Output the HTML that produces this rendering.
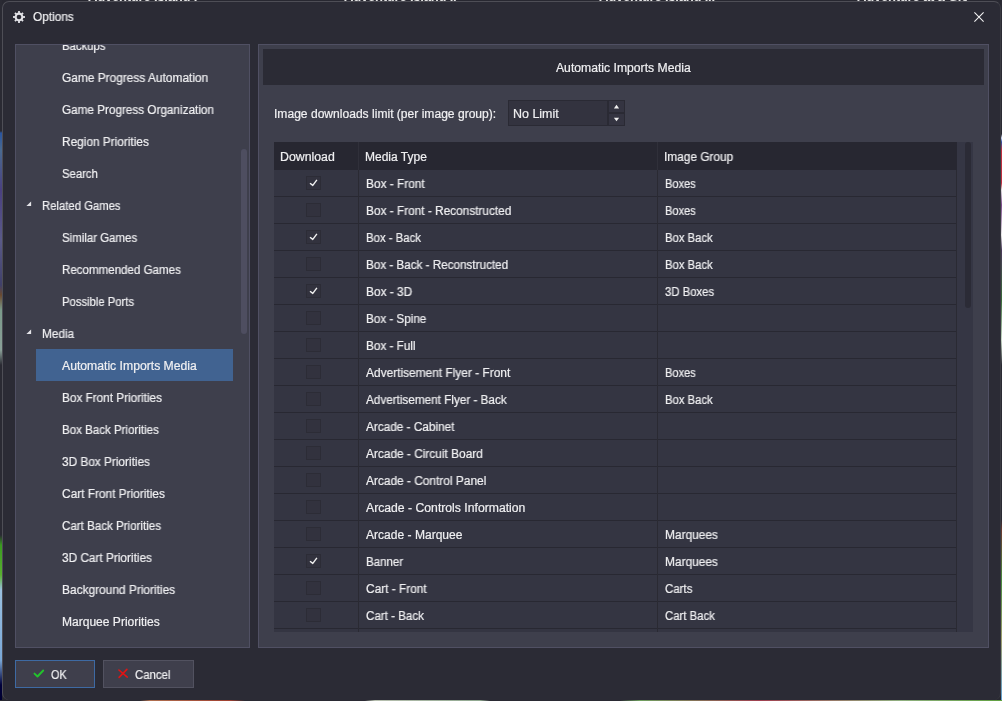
<!DOCTYPE html>
<html><head><meta charset="utf-8">
<style>
*{box-sizing:border-box;margin:0;padding:0}
html,body{width:1002px;height:701px;overflow:hidden}
body{-webkit-font-smoothing:antialiased;background:#282831;font-family:"Liberation Sans",sans-serif;font-size:12px;color:#f0f0f2;position:relative}
.abs{position:absolute}
.bgt{position:absolute;top:-10px;height:14px;font:bold 13px/14px "Liberation Sans",sans-serif;color:#e8e8e8;white-space:nowrap;overflow:hidden;letter-spacing:-0.2px;will-change:transform}
.win{position:absolute;left:2px;top:1px;width:999px;height:699px;background:#2b2b35;border-radius:7px;border:1px solid #4e4e56;border-bottom:none;border-right-color:#3a3a42}
.t{position:absolute;white-space:nowrap;line-height:14px;will-change:transform;-webkit-text-stroke:0.2px #f0f0f2}
.panel{position:absolute;background:#3e3f4c;border:1px solid #505063}
.clip{position:absolute;overflow:hidden}
.sel{position:absolute;width:197px;height:32px;background:#416391}
.tri{position:absolute;width:0;height:0;border-style:solid;border-width:0 0 5px 5px;border-color:transparent transparent #dcdce2 transparent}
.sthumb{position:absolute;width:6px;background:#4e4e60;border-radius:3px}
.hdr{position:absolute;left:0;top:0;width:683px;height:28px;background:#272731}
.row{position:absolute;left:0;width:682px;height:27px;border-bottom:1px solid #282832;background:#343542}
.vl{position:absolute;top:0;width:1px;background:#2a2a33}
.vlh{position:absolute;top:0;width:1px;height:28px;background:#30303a}
.t{transform-origin:0 0}
.cb{position:absolute;width:15px;height:14px;border:1px solid #2c2c36;background:#32323e}
.track{position:absolute;top:0;width:16px;height:490px;background:#353644}
.tthumb{position:absolute;width:6px;background:#2b2b36;border-radius:3px}
.btn{position:absolute;top:660px;height:28px;background:#3f3f4c;border:1px solid #525260}
</style></head>
<body>
<div class="abs" style="left:0;top:0;width:2px;height:701px;background:linear-gradient(to bottom,#2a2a33 0,#2a2a33 131px,#2a55a0 133px,#4a6a90 150px,#4a4080 190px,#5a5a88 240px,#40406a 285px,#6a4a30 295px,#7a9a8a 310px,#8aa098 350px,#2a2a33 365px,#2a2a33 535px,#3a9a20 545px,#5ab030 575px,#9ac0e0 590px,#7aa8d8 660px,#00003a 685px,#000030 701px)"></div>
<div class="abs" style="left:1001px;top:0;width:1px;height:701px;background:linear-gradient(to bottom,#2a2a33 0,#2a2a33 134px,#d0d8f0 138px,#3050a0 142px,#c03040 150px,#c03040 183px,#e0e0e0 190px,#7a4a8a 205px,#e8e8e8 235px,#4a3a5a 250px,#3a6a3a 300px,#c8d8c8 340px,#2a2a33 365px,#2a2a33 520px,#6a3a30 530px,#4a8a40 580px,#a0a070 640px,#60a0d0 700px)"></div>
<div class="abs" style="left:0;top:700px;width:1002px;height:1px;background:linear-gradient(to right,#2a2a33 0,#2a2a33 140px,#b07050 150px,#a04030 230px,#2a2a33 245px,#2a2a33 365px,#b8c0b0 375px,#90a890 480px,#2a2a33 490px,#2a2a33 620px,#70a060 640px,#a04050 760px,#90b080 900px,#60a040 1002px)"></div>
<div class="abs" style="left:0;top:0;width:1002px;height:1px;overflow:hidden">
<div class="bgt" style="left:88px;width:111px">Adventure Island I</div>
<div class="bgt" style="left:344px;width:112px">Adventure Island II</div>
<div class="bgt" style="left:599px;width:117px">Adventure Island III</div>
<div class="bgt" style="left:857px;width:110px">Adventure at a Glo</div>
</div>
<div class="win"></div>

<svg class="abs" style="left:13px;top:11px" width="12" height="12" viewBox="0 0 12 12">
    <g fill="#e2e2e6">
    <path d="M6 1.6A4.4 4.4 0 1 0 6 10.4A4.4 4.4 0 1 0 6 1.6ZM6 3.7A2.3 2.3 0 1 1 6 8.3A2.3 2.3 0 1 1 6 3.7Z" fill-rule="evenodd"/>
    <rect x="5.1" y="0" width="1.8" height="12"/>
    <rect x="0" y="5.1" width="12" height="1.8"/>
    <rect x="5.1" y="0.3" width="1.8" height="11.4" transform="rotate(45 6 6)"/>
    <rect x="5.1" y="0.3" width="1.8" height="11.4" transform="rotate(-45 6 6)"/>
  </g>
  <circle cx="6" cy="6" r="2.3" fill="#2b2b35"/>
</svg>

<svg class="abs" style="left:973px;top:11px" width="12" height="12" viewBox="0 0 12 12">
  <path d="M1.4 1.4L10.6 10.6M10.6 1.4L1.4 10.6" stroke="#f4f4f4" stroke-width="1.05"/>
</svg>

<div class="panel" style="left:15px;top:44px;width:235px;height:604px"></div>
<div class="clip" style="left:16px;top:45px;width:233px;height:602px">
<div class="sel" style="left:20px;top:304px"></div>
<div class="t" style="left:46px;top:-6.2px;transform:scaleX(0.9437)">Backups</div>
<div class="t" style="left:46px;top:25.8px;transform:scaleX(0.9911)">Game Progress Automation</div>
<div class="t" style="left:46px;top:57.8px;transform:scaleX(0.9774)">Game Progress Organization</div>
<div class="t" style="left:46px;top:89.8px;transform:scaleX(0.9875)">Region Priorities</div>
<div class="t" style="left:46px;top:121.8px;transform:scaleX(0.9435)">Search</div>
<svg class="abs" style="left:10px;top:156px" width="6" height="6" viewBox="0 0 6 6"><path d="M0.4 5L5.1 5L5.1 0.4Z" fill="#e4e4e8"/></svg>
<div class="t" style="left:26px;top:153.8px;transform:scaleX(0.9422)">Related Games</div>
<div class="t" style="left:46px;top:185.8px;transform:scaleX(0.9544)">Similar Games</div>
<div class="t" style="left:46px;top:217.8px;transform:scaleX(0.9627)">Recommended Games</div>
<div class="t" style="left:46px;top:249.8px;transform:scaleX(0.9390)">Possible Ports</div>
<svg class="abs" style="left:10px;top:284px" width="6" height="6" viewBox="0 0 6 6"><path d="M0.4 5L5.1 5L5.1 0.4Z" fill="#e4e4e8"/></svg>
<div class="t" style="left:26px;top:281.8px;transform:scaleX(0.9819)">Media</div>
<div class="t" style="left:46px;top:313.8px;transform:scaleX(1.0158)">Automatic Imports Media</div>
<div class="t" style="left:46px;top:345.8px;transform:scaleX(0.9804)">Box Front Priorities</div>
<div class="t" style="left:46px;top:377.8px;transform:scaleX(0.9614)">Box Back Priorities</div>
<div class="t" style="left:46px;top:409.8px;transform:scaleX(0.9844)">3D Box Priorities</div>
<div class="t" style="left:46px;top:441.8px;transform:scaleX(0.9895)">Cart Front Priorities</div>
<div class="t" style="left:46px;top:473.8px;transform:scaleX(0.9641)">Cart Back Priorities</div>
<div class="t" style="left:46px;top:505.8px;transform:scaleX(0.9846)">3D Cart Priorities</div>
<div class="t" style="left:46px;top:537.8px;transform:scaleX(0.9922)">Background Priorities</div>
<div class="t" style="left:46px;top:569.8px;transform:scaleX(1.0030)">Marquee Priorities</div>
<div class="sthumb" style="left:225px;top:104px;height:185px"></div>
</div>

<div class="panel" style="left:258px;top:44px;width:731px;height:604px"></div>
<div class="abs" style="left:263px;top:49px;width:721px;height:36px;background:#2b2b35"></div>


<div class="abs" style="left:508px;top:100px;width:117px;height:26px;background:#33333f;border:1px solid #2a2a34"></div>

<div class="abs" style="left:607px;top:100px;width:18px;height:26px;background:#2a2a34"></div>
<div class="abs" style="left:609px;top:101px;width:15px;height:11px;background:#343441"></div>
<div class="abs" style="left:609px;top:114px;width:15px;height:11px;background:#343441"></div>
<svg class="abs" style="left:609px;top:101px" width="15" height="24" viewBox="0 0 15 24">
  <path d="M4.9 7.4L7.5 3.8L10.1 7.4Z" fill="#f0f0f0"/>
  <path d="M4.9 16.7L7.5 20.3L10.1 16.7Z" fill="#f0f0f0"/>
</svg>

<div class="clip" style="left:274px;top:142px;width:699px;height:490px;background:#353542">
<div class="hdr"></div>
<div class="t" style="left:6px;top:7.8px;transform:scaleX(1.0266)">Download</div>
<div class="t" style="left:91px;top:7.8px">Media Type</div>
<div class="t" style="left:390px;top:7.8px;transform:scaleX(0.9886)">Image Group</div>
<div class="row" style="top:28px"></div>
<div class="cb" style="left:32px;top:34px"><svg width="12" height="12" viewBox="0 0 12 12" style="position:absolute;left:0;top:0"><path d="M3 6.2L5.8 8.4L9.9 2.9" fill="none" stroke="#f2f2f2" stroke-width="1.4" stroke-linejoin="round"/></svg></div>
<div class="t" style="left:92px;top:34.8px;transform:scaleX(0.9884)">Box - Front</div>
<div class="t" style="left:391px;top:34.8px;transform:scaleX(0.9213)">Boxes</div>
<div class="row" style="top:55px"></div>
<div class="cb" style="left:32px;top:61px"></div>
<div class="t" style="left:92px;top:61.8px;transform:scaleX(0.9864)">Box - Front - Reconstructed</div>
<div class="t" style="left:391px;top:61.8px;transform:scaleX(0.9213)">Boxes</div>
<div class="row" style="top:82px"></div>
<div class="cb" style="left:32px;top:88px"><svg width="12" height="12" viewBox="0 0 12 12" style="position:absolute;left:0;top:0"><path d="M3 6.2L5.8 8.4L9.9 2.9" fill="none" stroke="#f2f2f2" stroke-width="1.4" stroke-linejoin="round"/></svg></div>
<div class="t" style="left:92px;top:88.8px;transform:scaleX(0.9483)">Box - Back</div>
<div class="t" style="left:391px;top:88.8px;transform:scaleX(0.9394)">Box Back</div>
<div class="row" style="top:109px"></div>
<div class="cb" style="left:32px;top:115px"></div>
<div class="t" style="left:92px;top:115.8px;transform:scaleX(0.9726)">Box - Back - Reconstructed</div>
<div class="t" style="left:391px;top:115.8px;transform:scaleX(0.9394)">Box Back</div>
<div class="row" style="top:136px"></div>
<div class="cb" style="left:32px;top:142px"><svg width="12" height="12" viewBox="0 0 12 12" style="position:absolute;left:0;top:0"><path d="M3 6.2L5.8 8.4L9.9 2.9" fill="none" stroke="#f2f2f2" stroke-width="1.4" stroke-linejoin="round"/></svg></div>
<div class="t" style="left:92px;top:142.8px;transform:scaleX(0.9892)">Box - 3D</div>
<div class="t" style="left:391px;top:142.8px;transform:scaleX(0.9444)">3D Boxes</div>
<div class="row" style="top:163px"></div>
<div class="cb" style="left:32px;top:169px"></div>
<div class="t" style="left:92px;top:169.8px;transform:scaleX(0.9726)">Box - Spine</div>
<div class="row" style="top:190px"></div>
<div class="cb" style="left:32px;top:196px"></div>
<div class="t" style="left:92px;top:196.8px;transform:scaleX(0.9781)">Box - Full</div>
<div class="row" style="top:217px"></div>
<div class="cb" style="left:32px;top:223px"></div>
<div class="t" style="left:92px;top:223.8px;transform:scaleX(0.9926)">Advertisement Flyer - Front</div>
<div class="t" style="left:391px;top:223.8px;transform:scaleX(0.9213)">Boxes</div>
<div class="row" style="top:244px"></div>
<div class="cb" style="left:32px;top:250px"></div>
<div class="t" style="left:92px;top:250.8px;transform:scaleX(0.9771)">Advertisement Flyer - Back</div>
<div class="t" style="left:391px;top:250.8px;transform:scaleX(0.9394)">Box Back</div>
<div class="row" style="top:271px"></div>
<div class="cb" style="left:32px;top:277px"></div>
<div class="t" style="left:92px;top:277.8px;transform:scaleX(0.9823)">Arcade - Cabinet</div>
<div class="row" style="top:298px"></div>
<div class="cb" style="left:32px;top:304px"></div>
<div class="t" style="left:92px;top:304.8px;transform:scaleX(0.9898)">Arcade - Circuit Board</div>
<div class="row" style="top:325px"></div>
<div class="cb" style="left:32px;top:331px"></div>
<div class="t" style="left:92px;top:331.8px;transform:scaleX(0.9910)">Arcade - Control Panel</div>
<div class="row" style="top:352px"></div>
<div class="cb" style="left:32px;top:358px"></div>
<div class="t" style="left:92px;top:358.8px;transform:scaleX(1.0167)">Arcade - Controls Information</div>
<div class="row" style="top:379px"></div>
<div class="cb" style="left:32px;top:385px"></div>
<div class="t" style="left:92px;top:385.8px;transform:scaleX(1.0042)">Arcade - Marquee</div>
<div class="t" style="left:391px;top:385.8px;transform:scaleX(0.9907)">Marquees</div>
<div class="row" style="top:406px"></div>
<div class="cb" style="left:32px;top:412px"><svg width="12" height="12" viewBox="0 0 12 12" style="position:absolute;left:0;top:0"><path d="M3 6.2L5.8 8.4L9.9 2.9" fill="none" stroke="#f2f2f2" stroke-width="1.4" stroke-linejoin="round"/></svg></div>
<div class="t" style="left:92px;top:412.8px;transform:scaleX(0.9594)">Banner</div>
<div class="t" style="left:391px;top:412.8px;transform:scaleX(0.9907)">Marquees</div>
<div class="row" style="top:433px"></div>
<div class="cb" style="left:32px;top:439px"></div>
<div class="t" style="left:92px;top:439.8px;transform:scaleX(0.9887)">Cart - Front</div>
<div class="t" style="left:391px;top:439.8px;transform:scaleX(0.9536)">Carts</div>
<div class="row" style="top:460px"></div>
<div class="cb" style="left:32px;top:466px"></div>
<div class="t" style="left:92px;top:466.8px;transform:scaleX(0.9667)">Cart - Back</div>
<div class="t" style="left:391px;top:466.8px;transform:scaleX(0.9454)">Cart Back</div>
<div class="row" style="top:487px"></div>
<div class="cb" style="left:32px;top:493px"></div>
<div class="t" style="left:92px;top:493.8px">Cart - Spine</div>
<div class="vl" style="left:84px;top:28px;height:470px"></div>
<div class="vl" style="left:383px;top:28px;height:470px"></div>
<div class="vlh" style="left:84px"></div>
<div class="vlh" style="left:383px"></div>
<div class="vl" style="left:682px;top:28px;height:470px"></div>
<div class="track" style="left:683px"></div>
<div class="tthumb" style="left:691px;top:0px;height:166px"></div>
</div>

<div class="btn" style="left:15px;width:80px;border-color:#3e6aa3"></div>
<div class="btn" style="left:103px;width:91px"></div>
<svg class="abs" style="left:32px;top:668px" width="14" height="11" viewBox="0 0 14 11">
  <path d="M2.5 5.6L5.5 8.5L11.2 2.5" fill="none" stroke="#22c42c" stroke-width="1.9" stroke-linecap="round" stroke-linejoin="round"/>
</svg>
<svg class="abs" style="left:116px;top:667px" width="14" height="13" viewBox="0 0 14 13">
  <path d="M2.9 3L11.3 10.1M10.9 2.4L3.1 10.4" fill="none" stroke="#e01414" stroke-width="1.6" stroke-linecap="round"/>
</svg>


<div class="t" style="left:33px;top:9.8px;transform:scaleX(0.9854)">Options</div>
<div class="t" style="left:556px;top:60.8px;transform:scaleX(1.0150)">Automatic Imports Media</div>
<div class="t" style="left:274px;top:106.8px;transform:scaleX(1.0064)">Image downloads limit (per image group):</div>
<div class="t" style="left:513px;top:106.8px;transform:scaleX(1.0386)">No Limit</div>
<div class="t" style="left:51px;top:667.8px;transform:scaleX(0.9063)">OK</div>
<div class="t" style="left:135px;top:667.8px;transform:scaleX(0.9489)">Cancel</div>
</body></html>
